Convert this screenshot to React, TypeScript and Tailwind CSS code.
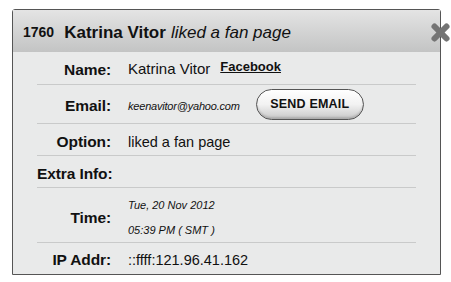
import React from "react"

const rows = [
	{ key: "name", label: "Name:", h: "h-[33px] pt-[3px]" },
	{ key: "email", label: "Email:", h: "h-[39px] pt-[4px]" },
	{ key: "option", label: "Option:", h: "h-[32px] pt-[4px]" },
	{ key: "extra", label: "Extra Info:", h: "h-[32px] pt-[4px]" },
	{ key: "time", label: "Time:", h: "h-[55px] pt-[5px]" },
	{ key: "ip", label: "IP Addr:", h: "h-[31px] pt-[2px]" },
]

const CloseIcon = () => (
	<svg width="21" height="21" viewBox="0 0 21 21" className="absolute right-[-11px] top-[12px]">
		<g stroke="#747474" strokeWidth="6" strokeLinecap="round">
			<line x1="4.5" y1="4.5" x2="16.5" y2="16.5" />
			<line x1="16.5" y1="4.5" x2="4.5" y2="16.5" />
		</g>
	</svg>
)

const Value = ({ k }: { k: string }) => {
	switch (k) {
		case "name":
			return (
				<div className="flex items-center gap-[10px] text-[15px]">
					<span>Katrina Vitor</span>
					<a className="-mt-[5px] text-[13px] font-bold underline">Facebook</a>
				</div>
			)
		case "email":
			return (
				<div className="flex items-center gap-[16px]">
					<span className="text-[11px] italic tracking-[-0.2px]">keenavitor@yahoo.com</span>
					<button className="-mt-[3px] h-[31px] w-[108px] rounded-full border border-[#555] bg-gradient-to-b from-white via-[#f2f2f2] to-[#c8c8c8] text-[12.5px] font-bold tracking-[0.2px] shadow-[inset_0_-2px_2px_rgba(0,0,0,0.15)]">
						SEND EMAIL
					</button>
				</div>
			)
		case "option":
			return <span className="text-[14.5px]">liked a fan page</span>
		case "time":
			return (
				<div className="flex flex-col gap-[8px] text-[11px] italic">
					<span>Tue, 20 Nov 2012</span>
					<span>05:39 PM ( SMT )</span>
				</div>
			)
		case "ip":
			return <span className="text-[14.5px]">::ffff:121.96.41.162</span>
		default:
			return null
	}
}

export default function App() {
	return (
		<div className="h-[282px] w-[451px] bg-white pl-[12px] pt-[9px] font-['Liberation_Sans',Arial,sans-serif] text-[#111]">
			<div className="relative w-[429px] rounded-t-[3px] border border-[#555] bg-[#e9eaea]">
				<div className="flex h-[42px] items-center gap-[10px] bg-gradient-to-b from-[#e4e4e4] to-[#c3c4c4] pl-[10px] pt-[3px]">
					<span className="text-[14px] font-bold">1760</span>
					<span className="text-[17px] font-bold">Katrina Vitor</span>
					<span className="-ml-[5px] text-[17px] italic">liked a fan page</span>
				</div>
				<CloseIcon />
				<div className="pl-[24px] pr-[24px]">
					{rows.map((r, i) => (
						<div
							key={r.key}
							className={`flex items-center ${r.h} ${i < rows.length - 1 ? "border-b border-[#c9caca]" : ""}`}
						>
							<div className="w-[74px] shrink-0 whitespace-nowrap text-right text-[15.5px] font-bold tracking-[-0.1px]">
								{r.label}
							</div>
							<div className="pl-[17px]">
								<Value k={r.key} />
							</div>
						</div>
					))}
				</div>
			</div>
		</div>
	)
}
